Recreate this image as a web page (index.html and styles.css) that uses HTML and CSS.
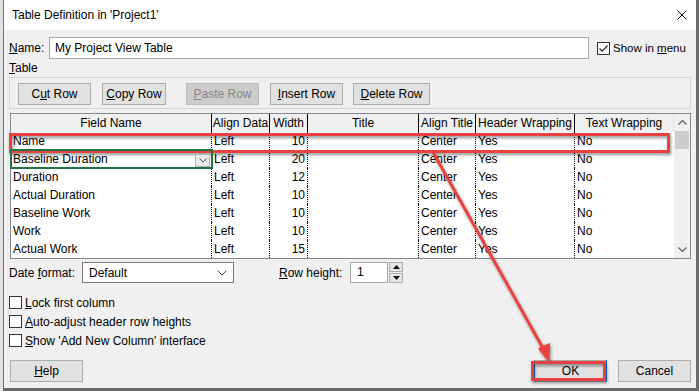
FILE: index.html
```html
<!DOCTYPE html>
<html lang="en">
<head>
<meta charset="UTF-8">
<title>Table Definition in 'Project1'</title>
<link rel="stylesheet" href="styles.css">
</head>
<body>
<div class="dlg">
  <div class="titlebar">
    <span class="title">Table Definition in 'Project1'</span>
    <svg class="close" viewBox="0 0 10 10"><path d="M0.5 0.5 L9.5 9.5 M9.5 0.5 L0.5 9.5" stroke="#111" stroke-width="1"/></svg>
  </div>

  <div class="content">
    <!-- name + show in menu -->
    <div class="name-row">
      <span class="lbl-name"><u>N</u>ame:</span>
      <div class="textbox name-box">My Project View Table</div>
      <span class="box checked">
        <svg viewBox="0 0 11 11"><path d="M1.5 5.5 L4.2 8.2 L9.5 2.5" fill="none" stroke="#222" stroke-width="1.2"/></svg>
      </span>
      <span class="chk-text menu-text">Show in <u>m</u>enu</span>
    </div>

    <div class="sec-label"><u>T</u>able</div>

    <div class="toolbar">
      <button class="btn b-cut">C<u>u</u>t Row</button>
      <button class="btn b-copy"><u>C</u>opy Row</button>
      <button class="btn b-paste" disabled><u>P</u>aste Row</button>
      <button class="btn b-insert"><u>I</u>nsert Row</button>
      <button class="btn b-delete"><u>D</u>elete Row</button>
    </div>

    <!-- field grid -->
    <div class="grid">
      <div class="cols">
        <div class="hd">Field Name</div>
        <div class="hd">Align Data</div>
        <div class="hd">Width</div>
        <div class="hd">Title</div>
        <div class="hd">Align Title</div>
        <div class="hd">Header Wrapping</div>
        <div class="hd last">Text Wrapping</div>

        <div class="cell">Name</div><div class="cell">Left</div><div class="cell num">10</div><div class="cell"></div><div class="cell">Center</div><div class="cell">Yes</div><div class="cell last">No</div>

        <div class="cell edit">Baseline Duration
          <span class="dd"><svg viewBox="0 0 8 5"><path d="M0.5 0.5 L4 4 L7.5 0.5" fill="none" stroke="#555" stroke-width="1"/></svg></span>
        </div><div class="cell">Left</div><div class="cell num">20</div><div class="cell"></div><div class="cell">Center</div><div class="cell">Yes</div><div class="cell last">No</div>

        <div class="cell">Duration</div><div class="cell">Left</div><div class="cell num">12</div><div class="cell"></div><div class="cell">Center</div><div class="cell">Yes</div><div class="cell last">No</div>
        <div class="cell">Actual Duration</div><div class="cell">Left</div><div class="cell num">10</div><div class="cell"></div><div class="cell">Center</div><div class="cell">Yes</div><div class="cell last">No</div>
        <div class="cell">Baseline Work</div><div class="cell">Left</div><div class="cell num">10</div><div class="cell"></div><div class="cell">Center</div><div class="cell">Yes</div><div class="cell last">No</div>
        <div class="cell">Work</div><div class="cell">Left</div><div class="cell num">10</div><div class="cell"></div><div class="cell">Center</div><div class="cell">Yes</div><div class="cell last">No</div>
        <div class="cell">Actual Work</div><div class="cell">Left</div><div class="cell num">15</div><div class="cell"></div><div class="cell">Center</div><div class="cell">Yes</div><div class="cell last">No</div>
      </div>

      <div class="vscroll">
        <span class="arrow"><svg viewBox="0 0 9 5"><path d="M0.5 4.5 L4.5 0.5 L8.5 4.5" fill="none" stroke="#606060" stroke-width="1.2"/></svg></span>
        <span class="thumb"></span>
        <span class="track"></span>
        <span class="arrow"><svg viewBox="0 0 9 5"><path d="M0.5 0.5 L4.5 4.5 L8.5 0.5" fill="none" stroke="#606060" stroke-width="1.2"/></svg></span>
      </div>
    </div>

    <!-- date format / row height -->
    <div class="opts-row">
      <span class="lbl-date">Date <u>f</u>ormat:</span>
      <div class="select">
        <span>Default</span>
        <svg viewBox="0 0 10 6"><path d="M0.5 0.5 L5 5 L9.5 0.5" fill="none" stroke="#444" stroke-width="1"/></svg>
      </div>
      <span class="lbl-rh"><u>R</u>ow height:</span>
      <div class="textbox rh-box">1</div>
      <div class="spin">
        <span class="spin-btn"><svg viewBox="0 0 7 4"><path d="M0 4 L3.5 0 L7 4 Z" fill="#111"/></svg></span>
        <span class="spin-btn"><svg viewBox="0 0 7 4"><path d="M0 0 L3.5 4 L7 0 Z" fill="#111"/></svg></span>
      </div>
    </div>

    <div class="checks">
      <div class="chk-row"><span class="box"></span><span class="chk-text"><u>L</u>ock first column</span></div>
      <div class="chk-row"><span class="box"></span><span class="chk-text"><u>A</u>uto-adjust header row heights</span></div>
      <div class="chk-row"><span class="box"></span><span class="chk-text"><u>S</u>how 'Add New Column' interface</span></div>
    </div>

    <div class="footer">
      <button class="btn b-help"><u>H</u>elp</button>
      <div class="footer-right">
        <button class="btn btn-default b-ok">OK</button>
        <button class="btn b-cancel">Cancel</button>
      </div>
    </div>
  </div>
</div>

<!-- callout annotations drawn over the screenshot -->
<svg class="annot" viewBox="0 0 699 391">
  <defs>
    <filter id="sh" x="-5%" y="-50%" width="110%" height="200%">
      <feDropShadow dx="1" dy="2" stdDeviation="1.6" flood-color="#000" flood-opacity="0.45"/>
    </filter>
  </defs>
  <g filter="url(#sh)" stroke="#e8423f" fill="none">
    <rect x="10.5" y="134.5" width="658" height="17" stroke-width="3"/>
    <line x1="433" y1="152" x2="544" y2="350" stroke-width="3"/>
    <path d="M549 362 L538.5 348.5 L549.5 343.5 Z" fill="#e8423f" stroke-width="1"/>
    <rect x="532.5" y="362.5" width="72" height="17" stroke-width="3"/>
  </g>
</svg>
</body>
</html>
```

FILE: styles.css
```css
:root{font-family:"Liberation Sans",Arial,sans-serif;font-size:12px;color:#000}
body{margin:0;width:699px;height:391px;background:#e2e2e2;overflow:hidden;position:relative}

/* ─────────── DIALOG FRAME ─────────── */
.dlg{margin-left:3px;width:692px;height:388px;background:#f0f0f0;
     border-left:1px solid #707070;border-right:3px solid #6b6b6b;border-bottom:3px solid #6b6b6b;
     display:flex;flex-direction:column}
.titlebar{height:30px;flex:none;background:#fff;display:flex;align-items:center;
          justify-content:space-between;padding:0 9px 0 8px}
.title{font-size:12px}
.close{width:10px;height:10px}

.content{padding:0 5px;display:flex;flex-direction:column}
u{text-decoration:underline;text-underline-offset:1px}

/* ─────────── INPUTS ─────────── */
.textbox{box-sizing:border-box;height:22px;background:#fff;border:1px solid #a9a9a9;
         line-height:20px;padding-left:5px;white-space:nowrap}
.name-row{margin-top:7px;height:22px;display:flex;align-items:center}
.lbl-name{width:40px}
.name-box{width:540px}
.name-row .box{margin-left:8px}
.menu-text{font-size:11.5px}

.box{box-sizing:border-box;width:13px;height:13px;border:1px solid #333;background:#fff;
     display:inline-flex;align-items:center;justify-content:center}
.box svg{width:11px;height:11px}
.chk-text{margin-left:3px;white-space:nowrap}

.sec-label{margin-top:2px;height:14px;line-height:14px}

/* ─────────── BUTTONS ─────────── */
.btn{font:inherit;color:#000;box-sizing:border-box;height:22px;padding:0;
     background:#e1e1e1;border:1px solid #adadad;white-space:nowrap}
.btn:disabled{background:#cccccc;border-color:#bfbfbf;color:#838383}
.btn-default{border-left-color:#0078d7;border-right-color:#0078d7}

.toolbar{margin-top:2px;height:32px;box-sizing:border-box;border:1px solid #d5d5d5;
         padding:5px 8px;display:flex;align-items:flex-start}
.b-cut{width:73px}
.b-copy{width:64px;margin-left:11px}
.b-paste{width:73px;margin-left:20px}
.b-insert{width:73px;margin-left:11px}
.b-delete{width:77px;margin-left:10px}

/* ─────────── GRID ─────────── */
.grid{margin:4px 0 0 1px;width:681px;height:146px;box-sizing:border-box;
      border:1px solid #828790;background:#fff;display:flex}
.cols{width:663px;display:grid;grid-template-columns:201px 58px 38px 111px 57px 99px 99px;
      grid-auto-rows:18px;align-content:start}
.hd{background:#f0f0f0;border-right:1px solid #000;text-align:center;line-height:19px;
    white-space:nowrap;overflow:hidden}
.hd.last{border-right:1px solid #e3e3e3}
.cell{border-right:1px dotted #000;padding-left:2px;line-height:18px;white-space:nowrap;overflow:hidden}
.cell.last{border-right:none}
.cell.num{text-align:right;padding:0 2px 0 0}
.cell.edit{outline:2px solid #217346;outline-offset:-1px;display:flex;align-items:center;
           justify-content:space-between;overflow:visible;position:relative;z-index:1}
.dd{box-sizing:border-box;width:15px;height:13px;margin:2px 1px 0 0;border:1px solid #b4b4b4;
    background:#eaeaea;display:flex;align-items:center;justify-content:center}
.dd svg{width:8px;height:5px}

.vscroll{width:16px;background:#f0f0f0;display:flex;flex-direction:column}
.arrow{height:17px;flex:none;display:flex;align-items:center;justify-content:center}
.arrow svg{width:9px;height:5px}
.thumb{height:18px;flex:none;background:#cdcdcd;margin:0 1px}
.track{flex:1}

/* ─────────── OPTIONS ─────────── */
.opts-row{margin-top:3px;height:21px;display:flex;align-items:center}
.lbl-date{width:73px}
.select{box-sizing:border-box;width:152px;height:21px;background:#fff;border:1px solid #7a7a7a;
        padding:0 6px;display:flex;align-items:center;justify-content:space-between}
.select svg{width:10px;height:6px}
.lbl-rh{margin-left:45px;width:71px}
.rh-box{width:38px;height:21px;padding-left:6px;line-height:19px}
.spin{margin-left:1px;width:14px;height:21px;display:flex;flex-direction:column;gap:1px}
.spin-btn{flex:1;box-sizing:border-box;border:1px solid #adadad;background:#e5e5e5;
          display:flex;align-items:center;justify-content:center}
.spin-btn svg{width:7px;height:4px}

.checks{margin-top:10px;display:flex;flex-direction:column}
.chk-row{height:19px;display:flex;align-items:center}

.footer{margin-top:10px;display:flex;justify-content:space-between}
.b-help{width:73px;margin-left:1px}
.footer-right{display:flex;gap:11px}
.b-ok,.b-cancel{width:73px}

/* ─────────── CALLOUTS ─────────── */
.annot{position:absolute;top:0;left:0;width:699px;height:391px;pointer-events:none}
```
